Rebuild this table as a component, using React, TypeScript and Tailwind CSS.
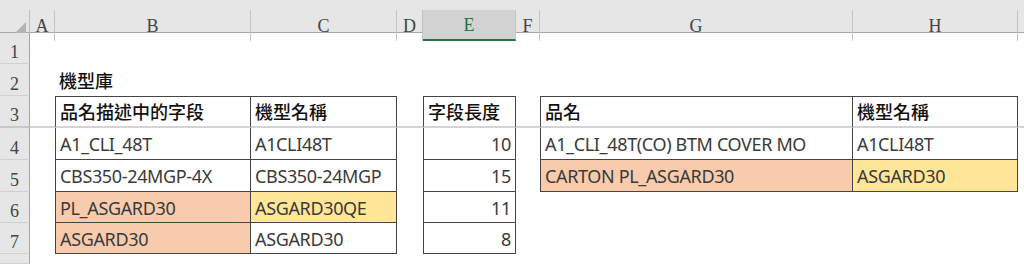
import React from "react";

type Cell = {
  t?: string;
  bg?: string;
  tbl?: boolean;
  l?: boolean;
  top?: boolean;
  num?: boolean;
  cjk?: boolean;
};

const letters = ["A", "B", "C", "D", "E", "F", "G", "H", ""];
const rowHeights = ["h-[31px]", "h-[32px]", "h-[32px]", "h-[32px]", "h-[32px]", "h-[31px]", "h-[31px]", "h-[10px]"];

const peach = "bg-[#f8cbad]";
const yellow = "bg-[#ffe699]";

// each row: cells for A..I
const rows: Cell[][] = [
  [{}, {}, {}, {}, {}, {}, {}, {}, {}],
  [{}, { t: "機型庫", cjk: true }, {}, {}, {}, {}, {}, {}, {}],
  [
    {},
    { t: "品名描述中的字段", cjk: true, tbl: true, l: true, top: true },
    { t: "機型名稱", cjk: true, tbl: true, top: true },
    {},
    { t: "字段長度", cjk: true, tbl: true, l: true, top: true },
    {},
    { t: "品名", cjk: true, tbl: true, l: true, top: true },
    { t: "機型名稱", cjk: true, tbl: true, top: true },
    {},
  ],
  [
    {},
    { t: "A1_CLI_48T", tbl: true, l: true },
    { t: "A1CLI48T", tbl: true },
    {},
    { t: "10", tbl: true, l: true, num: true },
    {},
    { t: "A1_CLI_48T(CO) BTM COVER MO", tbl: true, l: true },
    { t: "A1CLI48T", tbl: true },
    {},
  ],
  [
    {},
    { t: "CBS350-24MGP-4X", tbl: true, l: true },
    { t: "CBS350-24MGP", tbl: true },
    {},
    { t: "15", tbl: true, l: true, num: true },
    {},
    { t: "CARTON PL_ASGARD30", tbl: true, l: true, bg: peach },
    { t: "ASGARD30", tbl: true, bg: yellow },
    {},
  ],
  [
    {},
    { t: "PL_ASGARD30", tbl: true, l: true, bg: peach },
    { t: "ASGARD30QE", tbl: true, bg: yellow },
    {},
    { t: "11", tbl: true, l: true, num: true },
    {},
    {},
    {},
    {},
  ],
  [
    {},
    { t: "ASGARD30", tbl: true, l: true, bg: peach },
    { t: "ASGARD30", tbl: true },
    {},
    { t: "8", tbl: true, l: true, num: true },
    {},
    {},
    {},
    {},
  ],
  [{}, {}, {}, {}, {}, {}, {}, {}, {}],
];

const gridCols = "grid grid-cols-[30px_25px_196px_146px_26px_93px_24px_313px_165px_1fr]";

function DataCell({ c, ri }: { c: Cell; ri: number }) {
  const frozen = ri === 2;
  return (
    <div
      className={[
        "flex items-center overflow-visible whitespace-nowrap px-[4px] text-[18px] leading-none",
        c.bg ?? "",
        c.num ? "justify-end" : "justify-start",
        c.cjk ? "text-[#111] font-medium" : "text-[#3a3a3a] tracking-[-0.35px]",
        c.tbl ? "border-r border-r-[#454545]" : "",
        c.l ? "border-l border-l-[#454545]" : "",
        c.top ? "border-t border-t-[#454545]" : "",
        frozen ? "border-b-2 border-b-[#d4d4d4]" : c.tbl ? "border-b border-b-[#454545]" : "",
      ].join(" ")}
    >
      {c.t && <span className="pt-[1px]">{c.t}</span>}
    </div>
  );
}

export default function App() {
  return (
    <div
      className="w-[1024px] h-[264px] overflow-hidden bg-white"
      style={{ fontFamily: '"Noto Sans", "Noto Sans CJK TC", sans-serif' }}
    >
      {/* column headers */}
      <div className={`${gridCols} h-[33px] bg-[#e6e6e6] border-b border-[#a6a6a6]`}>
        <div className="flex items-end justify-end pb-[3px] pr-[3px] border-r border-[#bdbdbd] mt-[10px]">
          <svg width="16" height="16" viewBox="0 0 16 16">
            <polygon points="16,0 16,16 0,16" fill="#b3b3b3" />
          </svg>
        </div>
        {letters.map((l, i) => (
          <div
            key={i}
            className={[
              "mt-[10px] flex items-center justify-center text-[18px] font-['Liberation_Serif',serif]",
              l === "E" ? "bg-[#d2d2d2] border-b-2 border-b-[#217346] text-[#217346]" : "text-[#444]",
              i < 8 ? "border-r border-r-[#c4c4c4]" : "",
            ].join(" ")}
          >
            <span className="pt-[2px]">{l}</span>
          </div>
        ))}
      </div>

      {/* rows */}
      {rows.map((r, ri) => (
        <div key={ri} className={`${gridCols} ${rowHeights[ri]}`}>
          <div
            className={[
              "flex items-end justify-center bg-[#e6e6e6] border-r border-r-[#a6a6a6] pb-[2px] text-[18px] leading-none text-[#444] font-['Liberation_Serif',serif]",
              ri === 2 ? "border-b-2 border-b-[#c8c8c8]" : "border-b border-b-[#d0d0d0]",
            ].join(" ")}
          >
            {ri < 7 ? ri + 1 : ""}
          </div>
          {r.map((c, ci) => (
            <DataCell key={ci} c={c} ri={ri} />
          ))}
        </div>
      ))}
    </div>
  );
}
